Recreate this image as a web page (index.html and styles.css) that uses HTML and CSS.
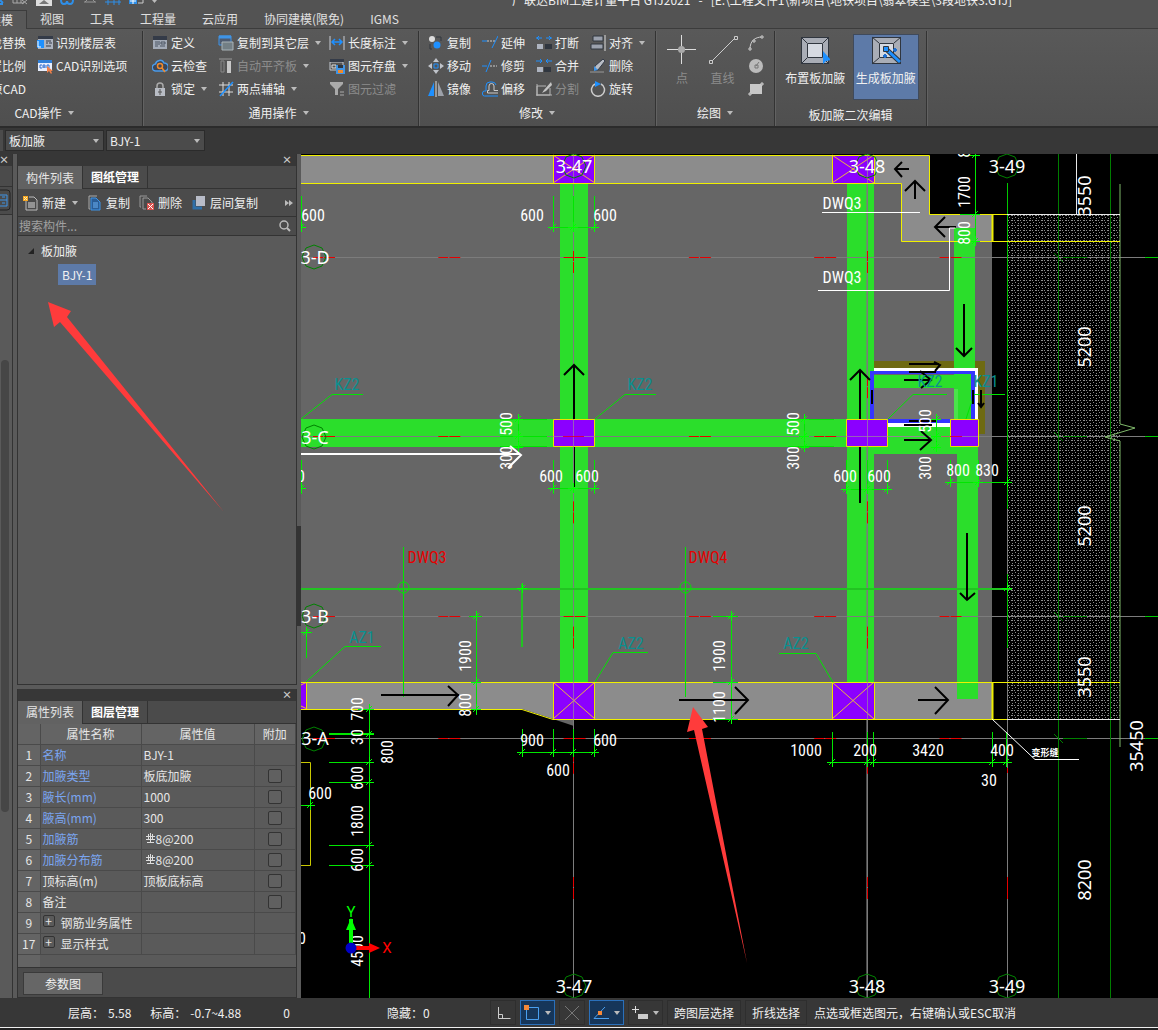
FILE: index.html
```html
<!DOCTYPE html>
<html lang="zh-CN">
<head>
    <meta charset="UTF-8">
    <meta name="viewport" content="width=device-width, initial-scale=1.0">
    <title>广联达BIM土建计量平台 GTJ2021</title>
    <link rel="stylesheet" href="styles.css">
</head>
<body>
    <header class="titlebar">
        <svg class="quick-icons" width="162" height="12" viewBox="0 0 162 12">
            <path d="M0 0l3 3M0 4h3" stroke="#2f8fe8" stroke-width="2"/>
            <path d="M13 0v3h11M17 0v3M21 0v3M22 0l5 4M27 0l-5 4" stroke="#aaa" fill="none"/>
            <path d="M36 0h16v6H36z" fill="#ddd"/><path d="M39 4l5-4 5 4z" fill="#777"/>
            <path d="M61 0q0 4 3 4t3-3q0 3 3 3t3-4" stroke="#2f8fe8" stroke-width="2" fill="none"/>
            <path d="M84 2h12M87 0l-2 2M93 0l2 2" stroke="#999" fill="none"/>
            <path d="M105 2h16M108 0v5M114 0v5M119 0v5" stroke="#2f8fe8" fill="none"/>
            <path d="M129 0h8v4h-8z" fill="#2f8fe8"/><path d="M130 1h6M133 0v4" stroke="#fff"/><path d="M138 3h5V0" stroke="#ccc" fill="none"/>
            <path d="M152 0h5l-2.500 3z" fill="#bbb"/>
        </svg>
        <span class="window-title">广联达BIM土建计量平台 GTJ2021 &nbsp; - &nbsp; [E:\工程文件1\新项目\地铁项目\翡翠模型\3段地铁3.GTJ]</span>
    </header>

    <nav class="tabs">
        <a href="#" class="tab tab-current">建模</a>
        <a href="#" class="tab">视图</a>
        <a href="#" class="tab">工具</a>
        <a href="#" class="tab">工程量</a>
        <a href="#" class="tab">云应用</a>
        <a href="#" class="tab">协同建模(限免)</a>
        <a href="#" class="tab">IGMS</a>
    </nav>

    <div class="ribbon">
        <section class="group group-cad">
            <div class="tools">
                <button class="tool cut">查找替换</button>
                <button class="tool cut">设置比例</button>
                <button class="tool cut">还原CAD</button>
                <button class="tool">
                    <svg width="16" height="16" viewBox="0 0 16 16"><path d="M1 1h15v13H1z" fill="#343b48"/><path d="M1 4h15v10H1z" fill="#aeb4c0"/><path d="M0 5h7v8H0z" fill="#1e90ff"/><path d="M1 6v6h3" stroke="#fff" fill="none"/><path d="M9 6h5M9 8h2M12 8h3M9 11h5" stroke="#343b48"/></svg>
                    识别楼层表
                </button>
                <button class="tool">
                    <svg width="16" height="16" viewBox="0 0 16 16"><path d="M1 2h14v3H1z" fill="#2f7fd8"/><path d="M1 5h14v8H1z" fill="#e8eefc"/><path d="M5 7H3v3h2M6 10V7h2v3M6 9h2M10 7v3h2V7z" stroke="#2f6fd0" fill="none"/><path d="M10 8v7l2-2 2 3 1-1-1-2h2z" fill="#f0804a"/></svg>
                    CAD识别选项
                </button>
            </div>
            <button class="group-name more">CAD操作</button>
        </section>

        <section class="group group-common">
            <div class="tools">
                <button class="tool">
                    <svg width="16" height="16" viewBox="0 0 16 16"><path d="M1 1h14v13H1z" fill="#a3abb8"/><path d="M1 1h14v4H1z" fill="#343b48"/><path d="M3 7h5M3 9h5M3 11h3M9 7h4v2H9zM8 11h5" stroke="#4b5563" fill="none"/></svg>
                    定义
                </button>
                <button class="tool">
                    <svg width="16" height="16" viewBox="0 0 16 16"><path d="M4 13a3.500 3.500 0 0 1-.5-7A4.500 4.500 0 0 1 12 5a4 4 0 0 1 .5 8z" fill="#3c4658" stroke="#4a9bea" stroke-width="1.500"/><circle cx="8" cy="8" r="2.500" fill="none" stroke="#f08a2c" stroke-width="1.500"/><path d="M10 10l3 4" stroke="#f08a2c" stroke-width="1.500"/></svg>
                    云检查
                </button>
                <button class="tool more">
                    <svg width="16" height="16" viewBox="0 0 16 16"><path d="M5 7V5a3 3 0 0 1 6 0v2" stroke="#aaa" fill="none" stroke-width="1.500"/><path d="M3 7h10v8H3z" fill="#b8bcc4"/><path d="M8 8v6M6 11h4" stroke="#555"/></svg>
                    锁定
                </button>
                <button class="tool more">
                    <svg width="16" height="16" viewBox="0 0 16 16"><path d="M1 1h12v9H1z" fill="#4e5b70" stroke="#3f94e6"/><path d="M1 2h12" stroke="#3f94e6" stroke-width="3"/><path d="M4 7h11v8H4z" fill="#737f85" stroke="#a9b4b8"/></svg>
                    复制到其它层
                </button>
                <button class="tool more off">
                    <svg width="16" height="16" viewBox="0 0 16 16"><path d="M1 1h13" stroke="#999"/><path d="M3 3h3v11H3z" fill="none" stroke="#888"/><path d="M9 3h4v12H9z" fill="#c8c8c8"/></svg>
                    自动平齐板
                </button>
                <button class="tool more">
                    <svg width="16" height="16" viewBox="0 0 16 16"><path d="M5 1v14M11 1v14M1 4h14M1 11h14" stroke="#ddd"/><path d="M2 15L15 1" stroke="#1e90ff" stroke-width="1.500"/></svg>
                    两点辅轴
                </button>
                <button class="tool more">
                    <svg width="16" height="16" viewBox="0 0 16 16"><path d="M1 1v14M15 1v14" stroke="#c8ccd4"/><path d="M3 7h10M6 4L3 7l3 3M10 4l3 3-3 3" stroke="#1e90ff" fill="none" stroke-width="1.500"/></svg>
                    长度标注
                </button>
                <button class="tool more">
                    <svg width="16" height="16" viewBox="0 0 16 16"><path d="M1 4h13v8H1z" fill="#555" stroke="#c3c8d0"/><path d="M1 1h14v3H1z" fill="#343b48"/><path d="M3 7h4v3H3z" fill="none" stroke="#ddd"/><path d="M7 7h9v9H7z" fill="#3f94e6"/><path d="M9 7h5v3H9z" fill="#30363f"/><path d="M9 12h5v3H9z" fill="#f08a2c"/></svg>
                    图元存盘
                </button>
                <button class="tool off">
                    <svg width="16" height="16" viewBox="0 0 16 16"><path d="M1 1h13v2L9 8v6H6V8L1 3z" fill="#aaa"/><path d="M11 11h4M11 14h4" stroke="#aaa"/></svg>
                    图元过滤
                </button>
            </div>
            <button class="group-name more">通用操作</button>
        </section>

        <section class="group group-modify">
            <div class="tools">
                <button class="tool">
                    <svg width="16" height="16" viewBox="0 0 16 16"><circle cx="4" cy="4" r="3" fill="#ddd"/><circle cx="9" cy="10" r="3.500" fill="#1e90ff"/><path d="M8 2h5v4M2 9v5h2" fill="none" stroke="#30363f"/></svg>
                    复制
                </button>
                <button class="tool">
                    <svg width="16" height="16" viewBox="0 0 16 16"><path d="M8 0l3 4H5zM8 16l3-4H5zM0 8l4-3v6zM16 8l-4-3v6z" fill="#bfc3ca"/><path d="M6 6h4v4H6z" fill="none" stroke="#1e90ff"/></svg>
                    移动
                </button>
                <button class="tool">
                    <svg width="16" height="16" viewBox="0 0 16 16"><path d="M6 1v14H0z" fill="#1e90ff"/><path d="M8 0v16" stroke="#ddd"/><path d="M10 1v14h6z" fill="#9da1a9"/></svg>
                    镜像
                </button>
                <button class="tool">
                    <svg width="16" height="16" viewBox="0 0 16 16"><path d="M0 6h5" stroke="#1e90ff"/><path d="M5 6h8" stroke="#ccc" stroke-dasharray="2 1"/><path d="M16 1l-6 12" stroke="#1e90ff"/></svg>
                    延伸
                </button>
                <button class="tool">
                    <svg width="16" height="16" viewBox="0 0 16 16"><path d="M0 8h5" stroke="#1e90ff"/><path d="M8 8h7" stroke="#ccc" stroke-dasharray="2 1"/><path d="M9 2L4 14" stroke="#1e90ff"/></svg>
                    修剪
                </button>
                <button class="tool">
                    <svg width="16" height="16" viewBox="0 0 16 16"><path d="M16 12H5.500V9.500H7V5a2.500 2.500 0 0 1 5 0v4.500h4" fill="none" stroke="#ccc"/><path d="M16 15H2.500a2 2 0 0 1-2-2v-1a2 2 0 0 1 2-2H4V5a4 4 0 0 1 4-4h2a4 4 0 0 1 4 3" fill="none" stroke="#1e90ff"/></svg>
                    偏移
                </button>
                <button class="tool">
                    <svg width="16" height="16" viewBox="0 0 16 16"><path d="M0 3h6M10 3h6M3 1L1 3l2 2M13 1l2 2-2 2" stroke="#1e90ff" fill="none"/><path d="M1 9h6v5H1z" fill="#aeb4c0"/><path d="M9 9h7v5H9z" fill="#30363f"/></svg>
                    打断
                </button>
                <button class="tool">
                    <svg width="16" height="16" viewBox="0 0 16 16"><path d="M0 3h6M10 3h6M4 1l2 2-2 2M12 1l-2 2 2 2" stroke="#1e90ff" fill="none"/><path d="M1 9h6v5H1z" fill="#aeb4c0"/><path d="M8 9h7v5H8z" fill="#30363f"/></svg>
                    合并
                </button>
                <button class="tool off">
                    <svg width="16" height="16" viewBox="0 0 16 16"><path d="M1 5h9M14 7v7H1V5M0 14h16M1 3v12" stroke="#b5b5b5" fill="none"/><path d="M15 1l-7 8-2 3 4-2 6-6z" fill="#c5c5c5"/></svg>
                    分割
                </button>
                <button class="tool more">
                    <svg width="16" height="16" viewBox="0 0 16 16"><path d="M3 1h10v5H3zM1 9h12v5H1z" fill="#9ba1ad" stroke="#30363f"/><path d="M15 0v16" stroke="#ddd"/></svg>
                    对齐
                </button>
                <button class="tool">
                    <svg width="16" height="16" viewBox="0 0 16 16"><path d="M13 1l2 2-7 9H4l1-4z" fill="#b8bcc4" stroke="#343b48"/><path d="M4 8l4 4-4 1z" fill="#3f94e6"/><path d="M0 14h14" stroke="#999"/></svg>
                    删除
                </button>
                <button class="tool">
                    <svg width="16" height="16" viewBox="0 0 16 16"><path d="M11 3a6.500 6.500 0 1 1-6 0" stroke="#ccc" stroke-width="1.500" fill="none"/><path d="M5 0l6 3-6 3z" fill="#1e90ff"/></svg>
                    旋转
                </button>
            </div>
            <button class="group-name more">修改</button>
        </section>

        <section class="group group-draw">
            <div class="tools">
                <button class="big off">
                    <svg width="30" height="30" viewBox="0 0 30 30"><path d="M14.500 0v11M14.500 18v11M0 14.500h11M18 14.500h11" stroke="#ddd"/><circle cx="14.500" cy="14.500" r="3.500" fill="#aaa"/></svg>
                    点
                </button>
                <button class="big off">
                    <svg width="30" height="30" viewBox="0 0 30 30"><path d="M3 27L27 3" stroke="#ccc"/><path d="M1.500 25.500h3v3h-3zM26.500 1.500h3v3h-3z" fill="#555" stroke="#ccc"/></svg>
                    直线
                </button>
                <div class="mini">
                    <button aria-label="弧"><svg width="16" height="16" viewBox="0 0 16 16"><path d="M2 14C2 6 7 2 14 2" stroke="#ccc" fill="none"/><path d="M1 13h2v2H1zM5 5h2v2H5zM13 1h2v2h-2z" fill="#555" stroke="#ccc"/></svg></button>
                    <button aria-label="圆"><svg width="16" height="16" viewBox="0 0 16 16"><circle cx="8" cy="8" r="7" fill="#bbb"/><path d="M8 8l3-4M7 7h3v3H7z" stroke="#777" fill="none"/></svg></button>
                    <button aria-label="矩形"><svg width="16" height="16" viewBox="0 0 16 16"><path d="M2 3h12v10H2z" fill="#c8c8c8"/><path d="M1 12h2v2H1zM13 2h2v2h-2z" fill="#777" stroke="#ccc"/></svg></button>
                </div>
            </div>
            <button class="group-name more">绘图</button>
        </section>

        <section class="group group-edit">
            <div class="tools">
                <button class="big">
                    <svg width="30" height="30" viewBox="0 0 30 30"><path d="M1.500 2.500h27v26h-27z" fill="#a9adb6" stroke="#30363f"/><path d="M7.500 8.500h15v14h-15z" fill="#d6dae2" stroke="#30363f"/><path d="M1 2l6 6M29 2l-6 6M1 29l6-6M29 29l-6-6" stroke="#30363f"/><path d="M23 16v13l3-3 5-1z" fill="#1e90ff"/></svg>
                    布置板加腋
                </button>
                <button class="big pressed">
                    <svg width="30" height="30" viewBox="0 0 30 30"><path d="M1.500 2.500h28v26h-28z" fill="#a9adb6" stroke="#30363f"/><path d="M8.500 8.500h14v14h-14z" fill="#d6dae2" stroke="#30363f"/><path d="M1 2l7 6M30 2l-7 6M1 29l7-6M30 29l-7-6" stroke="#30363f"/><path d="M15 14l14 13" stroke="#30363f" stroke-width="5"/><path d="M15 14l14 13" stroke="#1e90ff" stroke-width="3"/><path d="M12.500 11.500h5v5h-5z" fill="#1e90ff" stroke="#30363f"/><path d="M22 15h4M24 13v4M12 21h4M14 19v4" stroke="#1f6fd0" stroke-width="2"/></svg>
                    生成板加腋
                </button>
            </div>
            <div class="group-name">板加腋二次编辑</div>
        </section>
    </div>

    <div class="optionbar">
        <span class="stub"></span>
        <select aria-label="构件类型"><option>板加腋</option></select>
        <select aria-label="构件"><option>BJY-1</option></select>
    </div>

    <main class="workspace">
        <aside class="strip">
            <div class="dock-title"><button class="close" aria-label="关闭">×</button></div>
            <div class="strip-head"></div>
            <div class="strip-tool">
                <svg width="11" height="24" viewBox="0 0 11 24"><path d="M0 1h7q3 0 3 3v14q0 3-3 3H0" fill="#4b4b4b" stroke="#222"/><path d="M0 6h7v11H0M0 11h7M2 8h3M2 14h3" stroke="#3f94e6" fill="none"/></svg>
            </div>
            <div class="strip-body"><div class="thumb"></div></div>
        </aside>

        <div class="docks">
            <section class="dock dock-parts">
                <div class="dock-title"><button class="close" aria-label="关闭">×</button></div>
                <div class="dock-tabs"><button class="on">构件列表</button><button>图纸管理</button></div>
                <div class="dock-tools">
                    <button class="more">
                        <svg width="16" height="16" viewBox="0 0 16 16"><path d="M6 2h5l3 3v10H3V6" fill="none" stroke="#bbb"/><path d="M5 8h7M5 10h7M5 12h7" stroke="#ddd"/><path d="M0 1h5v5H0z" fill="#f5a623"/><path d="M1 2l3 3M4 2L1 5" stroke="#fff0b0"/></svg>
                        新建
                    </button>
                    <button>
                        <svg width="16" height="16" viewBox="0 0 16 16"><path d="M3 14H2V1h8" fill="none" stroke="#aaa"/><path d="M4 3h5l4 4v8H4z" fill="#2a5d96" stroke="#3f94e6"/><path d="M6 8h5M6 10h5M6 12h5" stroke="#6db3f5"/></svg>
                        复制
                    </button>
                    <button>
                        <svg width="16" height="16" viewBox="0 0 16 16"><path d="M2 12H1V1h7M4 14V3h5l4 4v1M4 14h3" fill="none" stroke="#999"/><path d="M8 8h7v7H8z" fill="#d9534f"/><path d="M9 9l5 5M14 9l-5 5" stroke="#fff"/></svg>
                        删除
                    </button>
                    <button>
                        <svg width="16" height="16" viewBox="0 0 16 16"><path d="M3 5v8h8" stroke="#2f6fa8" stroke-width="3" fill="none"/><path d="M5 1h9v10H5z" fill="#b8bcc8"/></svg>
                        层间复制
                    </button>
                    <button class="overflow" aria-label="更多"><svg width="8" height="6" viewBox="0 0 8 6"><path d="M0 0l4 3-4 3zM4 0l4 3-4 3z" fill="#bbb"/></svg></button>
                </div>
                <div class="search">
                    <input type="text" placeholder="搜索构件..." aria-label="搜索构件">
                    <svg width="12" height="12" viewBox="0 0 12 12"><circle cx="5" cy="5" r="4" fill="none" stroke="#bbb" stroke-width="1.500"/><path d="M8 8l3 3" stroke="#bbb" stroke-width="2"/></svg>
                </div>
                <div class="tree">
                    <div class="tree-parent"><svg width="7" height="7" viewBox="0 0 7 7"><path d="M6 0v6H0z" fill="#222"/></svg>板加腋</div>
                    <button class="tree-item">BJY-1</button>
                    <svg class="pointer" width="190" height="220" viewBox="42 298 190 220"><path d="M48 302l23 9-4 6L224 512 60 322l-6 5z" fill="#ff3b3b"/></svg>
                </div>
            </section>

            <section class="dock dock-props">
                <div class="dock-title"><button class="close" aria-label="关闭">×</button></div>
                <div class="dock-tabs"><button class="on">属性列表</button><button>图层管理</button></div>
                <table class="props">
                    <colgroup><col class="c-no"><col class="c-name"><col class="c-value"><col class="c-add"></colgroup>
                    <thead><tr><th></th><th>属性名称</th><th>属性值</th><th>附加</th></tr></thead>
                    <tbody>
                        <tr><th>1</th><td class="key">名称</td><td>BJY-1</td><td></td></tr>
                        <tr><th>2</th><td class="key">加腋类型</td><td>板底加腋</td><td><input type="checkbox" aria-label="加腋类型"></td></tr>
                        <tr><th>3</th><td class="key">腋长(mm)</td><td>1000</td><td><input type="checkbox" aria-label="腋长"></td></tr>
                        <tr><th>4</th><td class="key">腋高(mm)</td><td>300</td><td><input type="checkbox" aria-label="腋高"></td></tr>
                        <tr><th>5</th><td class="key">加腋筋</td><td><svg class="rebar" width="10" height="12" viewBox="0 0 10 12"><path d="M4.500 0v10M2.500 1v5M6.500 1v5M0 3.500h9M0 6.500h9M1 9.500h7" stroke="#ddd" fill="none"/></svg>8@200</td><td><input type="checkbox" aria-label="加腋筋"></td></tr>
                        <tr><th>6</th><td class="key">加腋分布筋</td><td><svg class="rebar" width="10" height="12" viewBox="0 0 10 12"><path d="M4.500 0v10M2.500 1v5M6.500 1v5M0 3.500h9M0 6.500h9M1 9.500h7" stroke="#ddd" fill="none"/></svg>8@200</td><td><input type="checkbox" aria-label="加腋分布筋"></td></tr>
                        <tr><th>7</th><td>顶标高(m)</td><td>顶板底标高</td><td><input type="checkbox" aria-label="顶标高"></td></tr>
                        <tr><th>8</th><td>备注</td><td></td><td><input type="checkbox" aria-label="备注"></td></tr>
                        <tr><th>9</th><td><button class="expand">+</button>钢筋业务属性</td><td></td><td></td></tr>
                        <tr><th>17</th><td><button class="expand">+</button>显示样式</td><td></td><td></td></tr>
                    </tbody>
                </table>
                <div class="props-rest"></div>
                <div class="props-foot"><button>参数图</button></div>
            </section>
        </div>

        <div class="splitter"><span></span></div>

        <div class="canvas">
            <svg class="plan" viewBox="301 154 857 844" preserveAspectRatio="xMinYMin slice">
                <defs>
                    <pattern id="dots" width="6" height="5" patternUnits="userSpaceOnUse">
                        <path d="M0 0h1v1H0zM3 0h2v1H3zM1 2h1v1H1zM4 3h1v1H4z" fill="#8c8c8c"/>
                    </pattern>
                    <path id="ring" d="M0-12l8 3 4 9-4 9-8 3-8-3-4-9 4-9z" fill="none" stroke="#008200"/>
                    <path id="tick" d="M-5 .5H5M.5-5V5M-3 3l6-6" stroke="#00ff00" fill="none"/>
                </defs>

                <!-- slabs and walls -->
                <path d="M301 183H902V241H992V682H301z" fill="#666"/>
                <path d="M301 155H929V214H992V241H902V183H301z" fill="#8c8c8c"/>
                <path d="M301 682H992V719H553L522 709H301z" fill="#8c8c8c"/>
                <path d="M522 709h31v10l21 7v-17z" fill="#666"/>
                <path d="M1007 214h113v505h-113z" fill="url(#dots)"/>

                <!-- beams -->
                <g fill="#2bde2b">
                    <path d="M560 183h28v499h-28zM847 183h27v499h-27zM954 228h21v192h-21z"/>
                    <path d="M301 419h649v28H301zM874 447h84v7h-84zM874 375h101v13H874zM957 447h21v252h-21z"/>
                </g>
                <path d="M874 388h80v31h-80z" fill="#727272"/>
                <path d="M954 389h4v30h-4z" fill="#4be34b"/>
                <path d="M874 361h111v73h-7v-66H874z" fill="#6e6a12"/>
                <path d="M874 368h104v51h-3v-48H874zM888 423h62v4h-62z" fill="#fff"/>
                <path d="M954 361h21v7h-21z" fill="#2bde2b"/>
                <path d="M870 371h105v48h-4v-45H874v45h-4zM888 419h62v4h-62z" fill="#3535ff"/>

                <!-- axes -->
                <g stroke="#7c7c7c">
                    <path d="M301 257.500H1158M301 436.500H1158M301 616.500H1158M301 738.500H1158M573.500 154V998M867.500 154V998M1007.500 509V998"/>
                    <path d="M867 183V998" stroke-width="2" stroke-opacity=".6"/>
                </g>
                <g stroke="#e60000">
                    <path d="M313 257.500H1000M313 436.500H1000M313 616.500H1000M313 738.500H1000" stroke-dasharray="10 1 11 103.300"/>
                    <path d="M573.500 251V900M867.500 251V900" stroke-dasharray="10 1 11 103.200"/>
                    <path d="M1007.500 768v5M1007.500 877v22"/>
                </g>
                <path d="M1058.500 154V998M1110.500 154V998" stroke="#007d00"/>
                <path d="M1007.500 183V509M1007.500 574V648M1145 257.500h13M1145 436.500h13M1145 616.500h13M1145 738.500h13" stroke="#00c800"/>
                <path d="M1054 253l9 9M1054 432l9 9M1054 612l9 9M1054 734l9 9M1063 257.500h24M1063 436.500h24M1063 616.500h24M1063 738.500h24" stroke="#008200"/>
                <path d="M1120 184V424l15 4-30 9 15 4V747" stroke="#7fb86a" fill="none"/>
                <path d="M1076.500 154v60M1007 214.500h113M1007 719.500h113" stroke="#e8e8e8"/>

                <!-- columns -->
                <g fill="#8b00ff" stroke="#f0e000">
                    <path d="M553.500 155.500h41v28h-41zM832.500 155.500h42v28h-42z"/>
                    <path d="M553.500 419.500h41v27h-41zM846.500 419.500h41v27h-41zM950.500 419.500h28v27h-28z"/>
                    <path d="M553.500 682.500h41v37h-41zM832.500 682.500h42v37h-42zM296.500 682.500h10v27h-10z"/>
                    <path d="M553 155l42 28M595 155l-42 28M832 155l42 28M874 155l-42 28M553 682l42 37M595 682l-42 37M832 682l42 37M874 682l-42 37M301 685l6-3M301 706l6 3" stroke="#e8b840"/>
                </g>
                <g stroke="#f0f000" fill="none">
                    <path d="M301 155.500H929.500V214.500H992.500V241.500H901.500V183.500H301"/>
                    <path d="M992 214.500h15M992 241.500h128M301 682.500H1120M301 709.500H522L553 719.500H1007"/>
                    <path d="M992.500 214v27M992.500 682v38" stroke-width="2"/>
                    <path d="M301 762.500h9.500v103H301" stroke="#c8c800"/>
                </g>
                <path d="M573.500 154v29M573.500 419v28M867.500 155v28M867.500 419v28M573.500 682v38M867.500 682v38M553 436.500h42M846 436.500h132" stroke="#9a8a9a" stroke-opacity=".7"/>
                <path d="M563 436.500h21M950 436.500h12" stroke="#d0004a"/>

                <!-- green dimension lines -->
                <g stroke="#00e600" fill="none">
                    <path d="M301.500 196v36M553.500 196v36M573.500 196v36M594.500 196v36M549 227.500h50"/>
                    <path d="M553.500 460v34M594.500 460v34M549 488.500h50M301.500 460v34"/>
                    <path d="M846.500 460v34M867.500 460v34M887.500 460v34M842 489.500h50"/>
                    <path d="M950.500 460v26M978.500 460v26M946 482.500h62"/>
                    <path d="M518.500 415v35M500 419.500h47M500 436.500h47M500 446.500h47M804.500 415v35M788 419.500h46M788 446.500h46M936.500 415v35"/>
                    <path d="M975.500 154v91M960 155.500h20M960 214.500h20M960 241.500h20"/>
                    <path d="M301 589H1012M522 584v63" stroke="#22c322" stroke-width="2"/>
                    <path d="M403.500 547V697M685.500 547V697"/>
                    <circle cx="403.500" cy="587.500" r="5.500"/><circle cx="685.500" cy="587.500" r="5.500"/>
                    <path d="M476.500 611v104M469 616.500h13M731.500 611v113M713 616.500h25M713 682.500h25M713 719.500h25"/>
                    <path d="M301 632.500h11M306.500 627v31"/>
                    <path d="M522.500 729v28M553.500 729v28M573.500 729v28M594.500 729v28M517 752.500h82"/>
                    <path d="M832.500 732v35M867.500 732v35M873.500 732v35M992.500 732v35M1006.500 732v35M828 762.500h184"/>
                    <path d="M369.500 704V998M358 709.500h16M329 762.500h45M329 782.500h45M329 845.500h45M329 865.500h45"/>
                    <path d="M329 734h45" stroke-width="2"/>
                    <path d="M301 805.500h14M310.500 788v22"/>
                    <path d="M301 419l31-24.500h31M595 419l30-24.500h31M888 419l25-24.500h34M966 419l8-24.500h31M306 682l39-35.500h36M595 682l18-29.500h35M779 653.500h37l17 29"/>
                </g>
                <g>
                    <use href="#tick" x="301" y="227"/><use href="#tick" x="553" y="227"/><use href="#tick" x="573" y="227"/><use href="#tick" x="594" y="227"/>
                    <use href="#tick" x="301" y="488"/><use href="#tick" x="553" y="488"/><use href="#tick" x="573" y="488"/><use href="#tick" x="594" y="488"/>
                    <use href="#tick" x="846" y="489"/><use href="#tick" x="867" y="489"/><use href="#tick" x="887" y="489"/>
                    <use href="#tick" x="950" y="482"/><use href="#tick" x="978" y="482"/><use href="#tick" x="1007" y="482"/>
                    <use href="#tick" x="518" y="419"/><use href="#tick" x="518" y="436"/><use href="#tick" x="518" y="447"/>
                    <use href="#tick" x="804" y="419"/><use href="#tick" x="804" y="436"/><use href="#tick" x="804" y="447"/>
                    <use href="#tick" x="936" y="419"/><use href="#tick" x="936" y="436"/><use href="#tick" x="936" y="447"/>
                    <use href="#tick" x="975" y="155"/><use href="#tick" x="975" y="214"/><use href="#tick" x="975" y="241"/>
                    <use href="#tick" x="522" y="588"/><use href="#tick" x="1007" y="588"/><use href="#tick" x="306" y="632"/>
                    <use href="#tick" x="476" y="616"/><use href="#tick" x="476" y="682"/><use href="#tick" x="476" y="709"/>
                    <use href="#tick" x="731" y="616"/><use href="#tick" x="731" y="682"/><use href="#tick" x="731" y="719"/>
                    <use href="#tick" x="522" y="752"/><use href="#tick" x="553" y="752"/><use href="#tick" x="573" y="752"/><use href="#tick" x="594" y="752"/>
                    <use href="#tick" x="832" y="762"/><use href="#tick" x="867" y="762"/><use href="#tick" x="873" y="762"/><use href="#tick" x="992" y="762"/><use href="#tick" x="1006" y="762"/>
                    <use href="#tick" x="369" y="709"/><use href="#tick" x="369" y="734"/><use href="#tick" x="369" y="762"/><use href="#tick" x="369" y="782"/><use href="#tick" x="369" y="845"/><use href="#tick" x="369" y="865"/><use href="#tick" x="310" y="805"/>
                </g>

                <!-- slope arrows -->
                <g stroke="#000" stroke-width="2" fill="none">
                    <path d="M574 419v-53M564 375l10-10 10 10"/>
                    <path d="M574.500 447v40" stroke-width="1"/>
                    <path d="M860 503V447M860 419v-49M850 380l10-10 10 10"/>
                    <path d="M909 169h-14M902 162l-7 7 7 8M915 199v-17M905 191l10-10 10 10M956 227h-20M945 217l-10 10 10 10"/>
                    <path d="M964 304v51M956 348l8 8 8-8M967 533v66M960 593l7 7 8-7"/>
                    <path d="M381 695h78M448 686l10 9-10 11M679 700h68M735 687l13 13-13 14M918 700h30M935 687l13 13-13 14"/>
                    <path d="M904 380h26M920 371l11 9-10 8M904 440h26M921 431l10 9-11 10M909 364h30M909 372h27M934 362l6 3-5 6M904 425h28M909 421h27M872 390v14M973 390v14M981 390v17M978 403l3 4 3-4"/>
                </g>
                <g stroke="#fff" fill="none">
                    <path d="M301 454h219M510 446l11 9-13 13" stroke-width="2"/>
                    <path d="M822 212.500h98M818 290.500h131.500V228h6"/>
                    <path d="M992 719l43 40.500h44"/>
                </g>

                <!-- axis labels -->
                <g>
                    <use href="#ring" x="574" y="166"/><use href="#ring" x="867" y="166"/><use href="#ring" x="1007" y="166"/>
                    <use href="#ring" x="314" y="257"/><use href="#ring" x="314" y="437"/><use href="#ring" x="314" y="616"/><use href="#ring" x="314" y="739"/>
                    <use href="#ring" x="574" y="986"/><use href="#ring" x="867" y="986"/><use href="#ring" x="1007" y="986"/>
                </g>
                <g class="axis">
                    <text x="574" y="166">3-47</text><text x="867" y="166">3-48</text><text x="1007" y="166">3-49</text>
                    <text x="315" y="257">3-D</text><text x="315" y="437">3-C</text><text x="315" y="616">3-B</text><text x="315" y="738">3-A</text>
                    <text x="574" y="986">3-47</text><text x="867" y="986">3-48</text><text x="1007" y="986">3-49</text>
                    <text transform="translate(1084 196) rotate(-90)">3550</text>
                    <text transform="translate(1084 347) rotate(-90)">5200</text>
                    <text transform="translate(1084 526) rotate(-90)">5200</text>
                    <text transform="translate(1084 677) rotate(-90)">3550</text>
                    <text transform="translate(1136 746) rotate(-90)">35450</text>
                    <text transform="translate(1084 880) rotate(-90)">8200</text>
                </g>

                <!-- dimension values -->
                <g class="dim">
                    <text x="313" y="215">600</text><text x="532" y="215">600</text><text x="605" y="215">600</text>
                    <text x="551" y="476">600</text><text x="587" y="476">600</text><text x="301" y="476">0</text>
                    <text x="845" y="476">600</text><text x="879" y="476">600</text><text x="958" y="470">800</text><text x="987" y="470">830</text>
                    <text x="532" y="740">900</text><text x="605" y="740">600</text><text x="558" y="770">600</text>
                    <text x="806" y="750">1000</text><text x="865" y="750">200</text><text x="928" y="750">3420</text><text x="1002" y="750">400</text><text x="989" y="780">30</text>
                    <text x="320" y="793">600</text><text x="302" y="938">0</text>
                    <text x="842" y="203">DWQ3</text><text x="842" y="277">DWQ3</text>
                    <text transform="translate(964 192) rotate(-90)">1700</text>
                    <text transform="translate(964 233) rotate(-90)">800</text>
                    <text transform="translate(964 146) rotate(-90)">800</text>
                    <text transform="translate(506 424) rotate(-90)">500</text>
                    <text transform="translate(506 458) rotate(-90)">300</text>
                    <text transform="translate(793 424) rotate(-90)">500</text>
                    <text transform="translate(793 458) rotate(-90)">300</text>
                    <text transform="translate(925 421) rotate(-90)">500</text>
                    <text transform="translate(925 468) rotate(-90)">300</text>
                    <text transform="translate(465 656) rotate(-90)">1900</text>
                    <text transform="translate(465 705) rotate(-90)">800</text>
                    <text transform="translate(719 656) rotate(-90)">1900</text>
                    <text transform="translate(719 707) rotate(-90)">1100</text>
                    <text transform="translate(357 709) rotate(-90)">700</text>
                    <text transform="translate(357 737) rotate(-90)">30</text>
                    <text transform="translate(387 752) rotate(-90)">800</text>
                    <text transform="translate(357 778) rotate(-90)">600</text>
                    <text transform="translate(357 821) rotate(-90)">1800</text>
                    <text transform="translate(357 860) rotate(-90)">600</text>
                    <text transform="translate(357 951) rotate(-90)">4500</text>
                </g>
                <g class="dim teal">
                    <text x="347" y="384">KZ2</text><text x="640" y="384">KZ2</text><text x="930" y="381">KZ2</text><text x="986" y="381">KZ1</text>
                    <text x="362" y="637">AZ1</text><text x="631" y="643">AZ2</text><text x="796" y="643">AZ2</text>
                </g>
                <g class="dim red"><text x="427" y="557">DWQ3</text><text x="708" y="557">DWQ4</text></g>
                <text class="joint" x="1045" y="752">变形缝</text>

                <!-- coordinate origin -->
                <path d="M351 947v-28" stroke="#00ff00" stroke-width="4"/><path d="M351 918l5 12h-10z" fill="#00ff00"/>
                <path d="M351 948h22" stroke="#ff0000" stroke-width="4"/><path d="M380 948l-11-5v10z" fill="#ff0000"/>
                <circle cx="351" cy="948" r="5.500" fill="#0000c8"/>
                <g class="origin"><text class="x" x="387" y="948">X</text><text class="y" x="351" y="912">Y</text></g>

                <path d="M693 707l15 20-6 2L747 963 694 730l-7 2z" fill="#ff3b3b"/>
            </svg>
        </div>
    </main>

    <footer class="statusbar">
        <div class="levels"><span>层高：</span><span>5.58</span><span>标高：</span><span>-0.7~4.88</span><span>0</span></div>
        <span class="hidden-count">隐藏：0</span>
        <div class="modes">
            <button aria-label="正交"><svg width="16" height="16" viewBox="0 0 16 16"><path d="M3.500 2v11.500h12M3 9.500h4.500v4" stroke="#ccc" fill="none"/></svg></button>
            <button class="more on" aria-label="捕捉"><svg width="16" height="16" viewBox="0 0 16 16"><path d="M2.500 2.500h12v12h-12z" stroke="#4aa0f0" fill="none"/><path d="M0 0h5v5H0z" fill="#f5893a"/></svg></button>
            <button aria-label="交点"><svg width="16" height="16" viewBox="0 0 16 16"><path d="M1 1l14 14M15 1L1 15" stroke="#777"/></svg></button>
            <button class="more on" aria-label="极轴"><svg width="16" height="16" viewBox="0 0 16 16"><path d="M12 2L1 13.500h15" stroke="#4aa0f0" fill="none"/><path d="M5 6h4v4H5z" fill="#f5893a"/></svg></button>
            <button class="more" aria-label="输入"><svg width="16" height="16" viewBox="0 0 16 16"><path d="M0 4.500h7M3.500 1v7" stroke="#ddd"/><path d="M6 9h10v5H6z" fill="#ccc"/></svg></button>
            <button class="wide">跨图层选择</button>
            <button class="wide">折线选择</button>
        </div>
        <span class="hint">点选或框选图元，右键确认或ESC取消</span>
    </footer>
</body>
</html>
```

FILE: styles.css
```css
* {
    box-sizing: border-box;
}
body {
    margin: 0;
    height: 100vh;
    display: flex;
    flex-direction: column;
    overflow: hidden;
    background: #222;
    color: #f0f0f0;
    font-family: "Noto Sans CJK SC", sans-serif;
    font-size: 12px;
    line-height: 18px;
    border-bottom: 2px solid #222;
}
button {
    margin: 0;
    padding: 0;
    border: 0;
    background: none;
    color: inherit;
    font: inherit;
    white-space: nowrap;
    cursor: pointer;
}
svg {
    flex: none;
}

/* title and tabs */
.titlebar {
    height: 10px;
    display: flex;
    align-items: flex-end;
    overflow: hidden;
    background: #535353;
}
.quick-icons {
    align-self: flex-start;
    margin-right: 350px;
}
.window-title {
    line-height: 20px;
    white-space: nowrap;
}
.tabs {
    display: flex;
    height: 19px;
    background: #535353;
    border-bottom: 1px solid #3c3c3c;
}
.tab {
    padding: 0 13px;
    line-height: 18px;
    color: #e0e0e0;
    text-decoration: none;
    white-space: nowrap;
}
.tab-current {
    display: flex;
    justify-content: flex-end;
    width: 27px;
    height: 19px;
    overflow: hidden;
    background: #585858;
    border-top: 1px solid #3c3c3c;
    border-right: 1px solid #3c3c3c;
}

/* ribbon */
.ribbon {
    display: flex;
    padding-top: 2px;
    background: linear-gradient(#595959, #4f4f4f);
    border-bottom: 2px solid #2b2b2b;
}
.group {
    display: flex;
    flex-direction: column;
    border-right: 1px solid #333;
    box-shadow: 1px 0 #626262;
}
.tools {
    display: grid;
    grid-template-rows: repeat(3, 23px);
    grid-auto-flow: column;
}
.tool {
    display: flex;
    align-items: center;
    gap: 3px;
}
.cut {
    justify-content: flex-end;
    overflow: hidden;
}
.off {
    color: #8c8c8c;
}
.more::after {
    content: "";
    margin-left: 3px;
    border: 3px solid transparent;
    border-top: 4px solid #bbb;
    border-bottom: 0;
}
.group-name {
    display: flex;
    align-items: center;
    justify-content: center;
    gap: 3px;
    height: 26px;
}
.group-cad {
    width: 143px;
}
.group-cad .tools {
    grid-template-columns: 26px 1fr;
    column-gap: 11px;
}
.group-cad .group-name {
    padding-right: 54px;
}
.group-common {
    width: 276px;
}
.group-common .tools {
    padding-left: 9px;
    grid-template-columns: 66px 111px 1fr;
}
.group-common .group-name {
    padding-right: 4px;
}
.group-modify {
    width: 237px;
}
.group-modify .tools {
    padding-left: 9px;
    grid-template-columns: 54px 54px 54px 1fr;
}
.group-draw {
    width: 119px;
}
.group-draw .tools {
    display: flex;
    height: 69px;
    padding: 0 10px 0 11px;
    justify-content: space-between;
}
.group-edit {
    width: 152px;
}
.group-edit .tools {
    display: flex;
    height: 69px;
    padding: 3px 7px 0;
    gap: 4px;
}
.group-edit .group-name {
    padding-top: 3px;
}
.big {
    display: flex;
    flex-direction: column;
    align-items: center;
    gap: 4px;
    padding-top: 4px;
}
.group-edit .big {
    flex: 1;
    padding-top: 0;
    border: 1px solid transparent;
}
.group-edit .pressed {
    background: #5d7aa8;
    border-color: #3f4a5c;
}
.mini {
    display: grid;
    grid-template-rows: repeat(3, 23px);
}
.mini svg {
    display: block;
}
.mini button {
    display: flex;
    align-items: center;
}

/* current component */
.optionbar {
    display: flex;
    gap: 2px;
    height: 26px;
    padding: 2px 0 3px;
    background: #373737;
}
.stub {
    width: 3px;
    background: #4b4b4b;
}
.optionbar select {
    width: 99px;
    padding: 0 3px;
    border: 1px solid #2b2b2b;
    border-radius: 0;
    appearance: none;
    background: url("data:image/svg+xml,%3Csvg xmlns='http://www.w3.org/2000/svg' width='6' height='4'%3E%3Cpath d='M0 0h6L3 4z' fill='%23bbb'/%3E%3C/svg%3E") no-repeat right 4px center, #4b4b4b;
    color: #f0f0f0;
    font: inherit;
}

/* workspace */
.workspace {
    flex: 1;
    min-height: 0;
    display: flex;
    background: #5a5a5a;
}
.strip {
    width: 13px;
    display: flex;
    flex-direction: column;
    border-right: 1px solid #333;
    background: #5a5a5a;
}
.strip-head {
    height: 21px;
    background: #4b4b4b;
    border-bottom: 1px solid #333;
}
.strip-tool {
    height: 28px;
    padding-top: 2px;
    background: #4b4b4b;
    border-bottom: 1px solid #333;
}
.strip-body {
    flex: 1;
    padding: 145px 3px 186px 1px;
}
.thumb {
    height: 100%;
    border-radius: 4px;
    background: #464646;
}
.docks {
    width: 280px;
    margin-left: 4px;
    display: flex;
    flex-direction: column;
    gap: 4px;
}
.dock {
    display: flex;
    flex-direction: column;
    border: 1px solid #333;
    border-top: 0;
}
.dock-parts {
    flex: 1;
    min-height: 0;
}
.dock-title {
    height: 12px;
    display: flex;
    justify-content: flex-end;
    align-items: center;
    padding: 0 4px;
    background: #373737;
}
.strip .dock-title {
    padding: 0 3px;
}
.close {
    color: #ccc;
    font-size: 10px;
    font-weight: 700;
    line-height: 12px;
}
.dock-tabs {
    display: flex;
    height: 23px;
    background: #4b4b4b;
    border-bottom: 1px solid #333;
}
.dock-tabs button {
    width: 65px;
    border-right: 1px solid #333;
    color: #fff;
    font-weight: 700;
}
.dock-tabs .on {
    height: 23px;
    background: #626262;
    color: #e6e6e6;
    font-weight: 400;
}
.dock-tools {
    display: flex;
    align-items: center;
    gap: 9px;
    height: 28px;
    padding: 0 3px 0 5px;
    background: #4b4b4b;
    border-bottom: 1px solid #333;
}
.dock-tools button {
    display: flex;
    align-items: center;
    gap: 3px;
}
.dock-tools .overflow {
    margin-left: auto;
}
.search {
    display: flex;
    align-items: center;
    height: 19px;
    padding: 0 5px 0 1px;
    background: #4b4b4b;
    border-bottom: 1px solid #333;
}
.search input {
    flex: 1;
    min-width: 0;
    padding: 0;
    border: 0;
    outline: 0;
    background: none;
    color: #eee;
    font: inherit;
}
.search input::placeholder {
    color: #a0a0a0;
}
.tree {
    position: relative;
    flex: 1;
    padding-top: 6px;
}
.tree-parent {
    display: flex;
    align-items: center;
    gap: 6px;
    padding-left: 10px;
}
.tree-item {
    display: block;
    height: 21px;
    margin: 4px 0 0 40px;
    padding: 0 4px;
    background: #5d7aa8;
}
.pointer {
    position: absolute;
    left: 24px;
    top: 62px;
    z-index: 2;
}

/* properties */
.props {
    width: 100%;
    table-layout: fixed;
    border-collapse: collapse;
    color: #e6e6e6;
}
.props .c-no {
    width: 22px;
}
.props .c-name {
    width: 101px;
}
.props .c-value {
    width: 113px;
}
.props th,
.props td {
    height: 21px;
    padding: 0 3px 0 2px;
    border-right: 1px solid #4a4a4a;
    border-bottom: 1px solid #4a4a4a;
    font-weight: 400;
    line-height: 20px;
    text-align: left;
    white-space: nowrap;
}
.props th {
    padding: 0;
    background: #646464;
    text-align: center;
}
.props td:last-child {
    padding: 0;
    text-align: center;
}
.props .key {
    color: #7aa5f0;
}
.props input {
    display: block;
    width: 14px;
    height: 14px;
    margin: 0 auto;
    appearance: none;
    border: 1px solid #333;
    border-radius: 2px;
    background: #606060;
}
.expand {
    width: 12px;
    height: 12px;
    margin-right: 6px;
    border: 1px solid #333;
    border-radius: 2px;
    line-height: 10px;
    vertical-align: 2px;
}
.rebar {
    margin-left: 2px;
    vertical-align: -1px;
}
.props-rest {
    height: 13px;
    border-bottom: 1px solid #333;
    background: linear-gradient(90deg, #646464 22px, transparent 22px);
}
.props-foot {
    padding: 4px 5px;
    height: 29px;
    background: #4b4b4b;
}
.props-foot button {
    display: block;
    width: 80px;
    height: 23px;
    background: #666;
    border: 1px solid #3a3a3a;
}
.splitter {
    width: 4px;
    display: flex;
    align-items: center;
    background: #5a5a5a;
}
.splitter span {
    width: 4px;
    height: 100px;
    background: #333;
}
.canvas {
    flex: 1;
    min-width: 0;
    background: #000;
}
.plan {
    display: block;
    width: 100%;
    height: 100%;
}
.plan text {
    text-anchor: middle;
    dominant-baseline: central;
    fill: #fff;
}
.axis {
    font-family: "Noto Sans", sans-serif;
    font-size: 18px;
}
.dim {
    font-family: "Roboto Condensed", Roboto, sans-serif;
    font-size: 16px;
}
.plan .teal text {
    fill: #0a9090;
}
.plan .red text {
    fill: #e60000;
}
.joint {
    font-size: 9px;
    font-weight: 700;
}
.plan .origin {
    font-family: Roboto, sans-serif;
    font-size: 15px;
}
.plan .origin .x {
    fill: #ff0000;
}
.plan .origin .y {
    fill: #00ff00;
}

/* status bar */
.statusbar {
    display: flex;
    align-items: center;
    height: 30px;
    background: #373737;
    border-bottom: 1px solid #eee;
    white-space: nowrap;
}
.levels {
    display: flex;
    width: 387px;
    padding-left: 68px;
    gap: 4px;
}
.levels span:nth-child(2) {
    margin-right: 15px;
}
.levels span:last-child {
    margin-left: 38px;
}
.hidden-count {
    width: 103px;
}
.modes {
    display: flex;
    gap: 4px;
}
.modes button {
    display: flex;
    align-items: center;
    justify-content: center;
    height: 25px;
    padding: 0 4px;
    border: 1px solid #2e2e2e;
}
.modes .more {
    gap: 2px;
    width: 35px;
}
.modes .on {
    background: #16365a;
    border-color: #2a70bb;
}
.modes .wide {
    padding: 0 6px;
}
.hint {
    margin-left: 7px;
}
```
